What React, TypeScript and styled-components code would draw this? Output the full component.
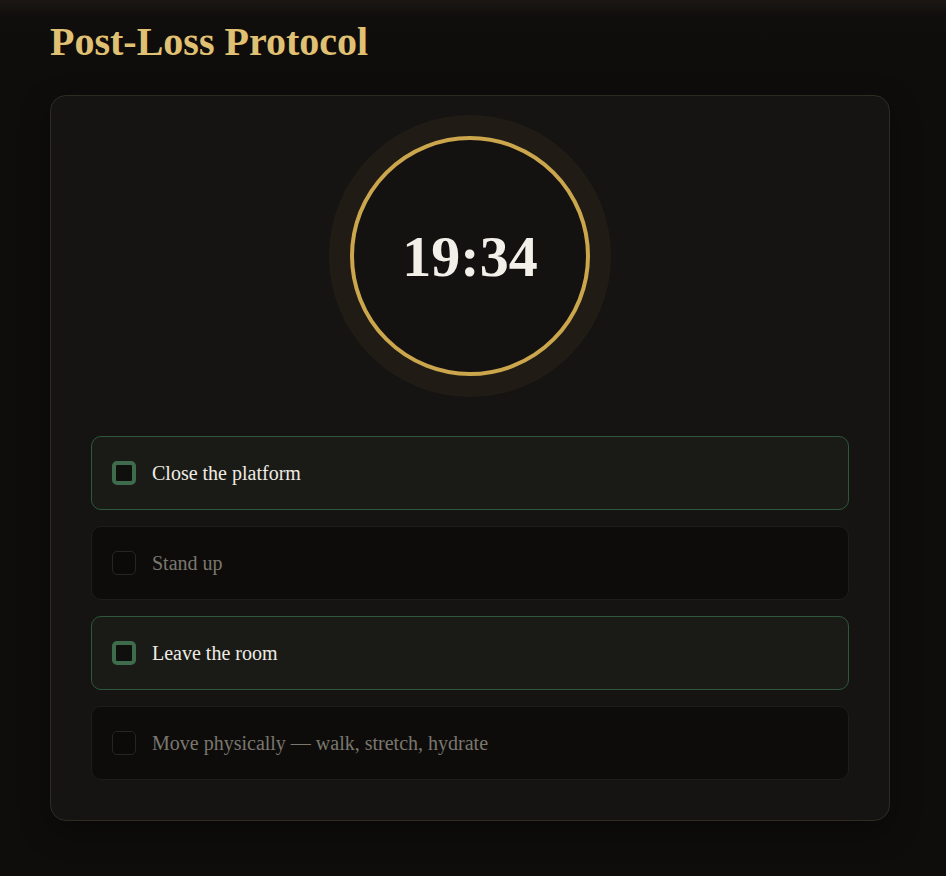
import React, { useState } from 'react'
import styled, { createGlobalStyle } from 'styled-components'

const GlobalStyle = createGlobalStyle`
    html, body {
        margin: 0;
        padding: 0;
        background: #0e0d0b;
    }
    body {
        font-family: "Liberation Serif", "Times New Roman", serif;
        min-height: 876px;
        background:
            linear-gradient(180deg, #1c1713 0px, #110f0d 14px, #0e0d0b 40px);
    }
`

const Page = styled.div`
    padding: 18px 56px 40px 50px;
`

const Title = styled.h1`
    margin: 0 0 29px 0;
    font-size: 40px;
    line-height: 48px;
    font-weight: 700;
    color: #e0c073;
`

const Card = styled.div`
    max-width: 838px;
    border: 1px solid #2e2c22;
    border-radius: 16px;
    background: #151412;
    padding: 40px;
    box-shadow: 0 10px 30px rgba(0, 0, 0, 0.35);
`

const TimerWrap = styled.div`
    display: flex;
    justify-content: center;
    margin-bottom: 60px;
`

const TimerRing = styled.div`
    width: 240px;
    height: 240px;
    box-sizing: border-box;
    border-radius: 50%;
    border: 4px solid #cba64c;
    background: #141210;
    box-shadow: 0 0 0 21px #201c15;
    display: flex;
    align-items: center;
    justify-content: center;
`

const TimerText = styled.span`
    font-size: 58px;
    font-weight: 700;
    color: #f3f0ea;
    line-height: 1;
    margin-top: 2px;
`

const List = styled.div`
    display: flex;
    flex-direction: column;
    gap: 16px;
`

const Item = styled.label<{ $done: boolean }>`
    display: flex;
    align-items: center;
    gap: 16px;
    padding: 24px 20px;
    border-radius: 10px;
    border: 1px solid ${p => (p.$done ? '#2f573b' : '#1f1d19')};
    background: ${p => (p.$done ? '#1a1b17' : '#0d0c0a')};
    cursor: pointer;
`

const Box = styled.span<{ $done: boolean }>`
    width: 24px;
    height: 24px;
    box-sizing: border-box;
    flex-shrink: 0;
    border-radius: 5px;
    border: ${p => (p.$done ? '4px solid #3d6b4c' : '1px solid #272520')};
    background: ${p => (p.$done ? '#0f0f0d' : '#0b0a09')};
`

const Label = styled.span<{ $done: boolean }>`
    font-size: 20px;
    line-height: 24px;
    color: ${p => (p.$done ? '#efebe3' : '#7b776f')};
`

const steps = [
    'Close the platform',
    'Stand up',
    'Leave the room',
    'Move physically — walk, stretch, hydrate',
]

export default function App() {
    const [done, setDone] = useState<boolean[]>([true, false, true, false])

    const toggle = (i: number) =>
        setDone(prev => prev.map((v, idx) => (idx === i ? !v : v)))

    return (
        <>
            <GlobalStyle />
            <Page>
                <Title>Post-Loss Protocol</Title>
                <Card>
                    <TimerWrap>
                        <TimerRing>
                            <TimerText>19:34</TimerText>
                        </TimerRing>
                    </TimerWrap>
                    <List>
                        {steps.map((s, i) => (
                            <Item key={s} $done={done[i]} onClick={() => toggle(i)}>
                                <Box $done={done[i]} />
                                <Label $done={done[i]}>{s}</Label>
                            </Item>
                        ))}
                    </List>
                </Card>
            </Page>
        </>
    )
}
